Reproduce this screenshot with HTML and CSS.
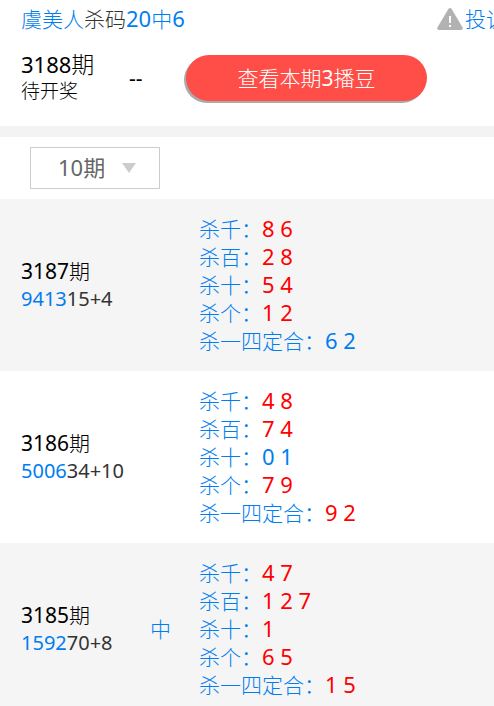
FILE: index.html
```html
<!DOCTYPE html>
<html lang="zh-CN">
<head>
  <meta charset="UTF-8" />
  <meta name="viewport" content="width=device-width, initial-scale=1.0"/>
  <title>虞美人杀码20中6</title>
  <link rel="stylesheet" href="styles.css">
</head>
<body>
  <div class="page">
    <header class="title-bar">
      <h1><a href="#">虞美人</a>杀码<span class="blue"><b>20</b>中<b>6</b></span></h1>
      <a class="complain" href="#">
        <svg width="26" height="23" viewBox="0 0 26 23" aria-hidden="true">
          <path d="M11.2 1.2Q13-1 14.8 1.2L25.6 19.5Q26.4 22 24 22H2Q-.4 22 .4 19.5Z" fill="#b2b2b2"/>
          <path d="M12 8h2v7h-2zM12 17h2v2h-2z" fill="#fff"/>
        </svg>
        <span>投诉</span>
      </a>
    </header>

    <section class="current">
      <div class="current-issue">
        <div class="issue-no"><b>3188</b>期</div>
        <div class="issue-state">待开奖</div>
      </div>
      <div class="current-result">--</div>
      <button class="view-btn" type="button">查看本期<b>3</b>播豆</button>
    </section>

    <div class="filter">
      <div class="select-box">
        <select id="period" aria-label="期数">
          <option selected>10期</option>
          <option>20期</option>
          <option>30期</option>
        </select>
      </div>
    </div>

    <table class="history">
      <tbody>
        <tr>
          <th class="issue" scope="row"><b>3187</b>期<div class="nums"><span class="blue">9413</span>15+4</div></th>
          <td class="hit"></td>
          <td class="codes">
            <div>杀千：<b class="red">8 6</b></div>
            <div>杀百：<b class="red">2 8</b></div>
            <div>杀十：<b class="red">5 4</b></div>
            <div>杀个：<b class="red">1 2</b></div>
            <div>杀一四定合：<b>6 2</b></div>
          </td>
        </tr>
        <tr>
          <th class="issue" scope="row"><b>3186</b>期<div class="nums"><span class="blue">5006</span>34+10</div></th>
          <td class="hit"></td>
          <td class="codes">
            <div>杀千：<b class="red">4 8</b></div>
            <div>杀百：<b class="red">7 4</b></div>
            <div>杀十：<b>0 1</b></div>
            <div>杀个：<b class="red">7 9</b></div>
            <div>杀一四定合：<b class="red">9 2</b></div>
          </td>
        </tr>
        <tr>
          <th class="issue" scope="row"><b>3185</b>期<div class="nums"><span class="blue">1592</span>70+8</div></th>
          <td class="hit">中</td>
          <td class="codes">
            <div>杀千：<b class="red">4 7</b></div>
            <div>杀百：<b class="red">1 2 7</b></div>
            <div>杀十：<b class="red">1</b></div>
            <div>杀个：<b class="red">6 5</b></div>
            <div>杀一四定合：<b class="red">1 5</b></div>
          </td>
        </tr>
      </tbody>
    </table>
  </div>
</body>
</html>
```

FILE: styles.css
```css
body {
  margin: 0;
  font-family: "Noto Sans", "Noto Sans CJK SC", sans-serif;
  font-size: 21px;
  font-weight: 300;
  line-height: 28px;
  color: #333;
  background: #fff;
}
.page {
  overflow: hidden;
}
a {
  color: #007df0;
  text-decoration: none;
}
/* digits are a step heavier than the characters */
b {
  font-weight: normal;
  line-height: 20px;
}
.blue {
  color: #007df0;
}
.red {
  color: #f00;
}
.title-bar {
  display: flex;
  justify-content: space-between;
  align-items: center;
  padding: 5px 0 0 21px;
  /* the link runs past the right edge */
  margin-right: -13px;
}
.title-bar h1 {
  margin: 0;
  font-size: 21px;
  font-weight: 300;
}
.title-bar b {
  font-size: 22px;
}
.complain {
  display: flex;
  align-items: center;
  gap: 2px;
}
.current {
  display: flex;
  align-items: center;
  padding: 17px 21px 21px;
  border-bottom: 11px solid #f3f3f3;
  color: #000;
}
.current-issue {
  width: 108px;
}
.issue-no {
  font-size: 23px;
}
.issue-no b {
  font-size: 22px;
}
.issue-state {
  font-size: 19px;
  line-height: 27px;
}
.current-result {
  width: 57px;
  font-weight: normal;
}
.view-btn {
  width: 241px;
  height: 46px;
  padding: 0 0 2px;
  border: none;
  border-radius: 23px;
  background: #ff4d47;
  box-shadow: -2px 2px 0 #aaa;
  color: #fff;
  font-family: inherit;
  font-size: 21px;
  font-weight: 300;
  cursor: pointer;
}
.filter {
  padding: 10px 30px;
}
.select-box {
  position: relative;
  width: 130px;
  height: 42px;
}
.select-box select {
  width: 100%;
  height: 100%;
  padding: 0 0 2px 27px;
  border: 1px solid #ccc;
  border-radius: 0;
  appearance: none;
  background: #fff;
  color: #666;
  font-family: inherit;
  font-size: 22px;
}
.select-box::after {
  content: "";
  position: absolute;
  top: 16px;
  right: 24px;
  border: 7px solid transparent;
  border-top: 10px solid #ccc;
  border-bottom: none;
  pointer-events: none;
}
.history {
  width: 100%;
  border-collapse: collapse;
  table-layout: fixed;
}
.history tr:nth-child(odd) {
  background: #f5f5f5;
}
.history th, .history td {
  padding: 16px 0;
  text-align: left;
  font-weight: 300;
}
.history .issue {
  width: 129px;
  padding-left: 21px;
  color: #000;
}
.history .nums {
  font-size: 20px;
  font-weight: normal;
  color: #333;
}
.history .hit {
  width: 49px;
  color: #007df0;
}
.codes {
  color: #007df0;
}
.codes b {
  font-size: 22px;
}
```
